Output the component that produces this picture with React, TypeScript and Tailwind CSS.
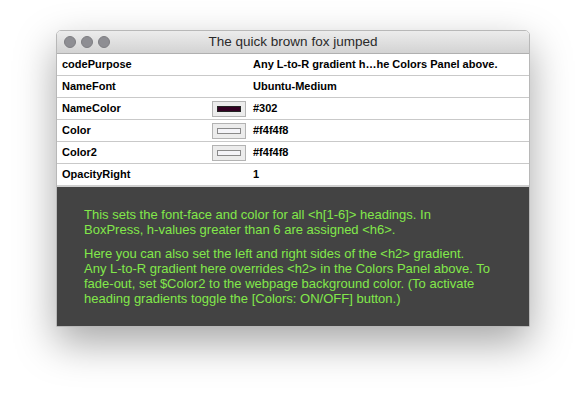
const rows: { label: string; value: string; swatch?: string }[] = [
  { label: 'codePurpose', value: 'Any L-to-R gradient h…he Colors Panel above.' },
  { label: 'NameFont', value: 'Ubuntu-Medium' },
  { label: 'NameColor', value: '#302', swatch: '#330022' },
  { label: 'Color', value: '#f4f4f8', swatch: '#f4f4f8' },
  { label: 'Color2', value: '#f4f4f8', swatch: '#f4f4f8' },
  { label: 'OpacityRight', value: '1' },
];

function Swatch({ color }: { color: string }) {
  const dark = color === '#330022';
  return (
    <div className="w-[34px] h-[16px] bg-[#ececec] border border-[#b3b3b3] flex items-center justify-center">
      <div
        className={dark ? 'w-[24px] h-[6px] border border-[#222]' : 'w-[24px] h-[6px] border border-[#8a8a8a]'}
        style={{ backgroundColor: color }}
      />
    </div>
  );
}

export default function App() {
  return (
    <div className="w-[586px] h-[407px] bg-white overflow-hidden font-['Liberation_Sans',Arial,sans-serif]">
      <div className="ml-[56px] mt-[30px] w-[474px] h-[297px] flex flex-col rounded-t-[5px] border border-[#b8b8b8] shadow-[0_16px_40px_rgba(0,0,0,0.35)] overflow-hidden">
        {/* title bar */}
        <div className="relative h-[23px] shrink-0 flex items-center justify-center bg-gradient-to-b from-[#ececec] to-[#d3d3d3] border-b border-[#b0b0b0]">
          <div className="absolute left-[7px] top-[5px] flex gap-[5px]">
            <div className="w-[12px] h-[12px] rounded-full bg-[#8e8e93] border border-[#7e7e82]" />
            <div className="w-[12px] h-[12px] rounded-full bg-[#8e8e93] border border-[#7e7e82]" />
            <div className="w-[12px] h-[12px] rounded-full bg-[#8e8e93] border border-[#7e7e82]" />
          </div>
          <span className="text-[13.5px] text-[#2a2a2a]">The quick brown fox jumped</span>
        </div>

        {/* property table */}
        <div className="bg-white shrink-0">
          {rows.map((r, i) => (
            <div
              key={r.label}
              className={i < rows.length - 1 ? 'h-[22px] flex items-center border-b border-[#c9c9c9]' : 'h-[21px] flex items-center'}
            >
              <div className="w-[155px] pl-[5px] text-[11px] font-bold text-black">{r.label}</div>
              <div className="w-[41px] flex items-center">{r.swatch && <Swatch color={r.swatch} />}</div>
              <div className="text-[11px] font-bold text-black">{r.value}</div>
            </div>
          ))}
        </div>

        {/* help panel */}
        <div className="flex-1 bg-[#434343] border-t-[2px] border-[#cfcfcf] pt-[20px] pl-[27px] text-[13px] leading-[15px] text-[#82e84a]">
          <p>
            This sets the font-face and color for all &lt;h[1-6]&gt; headings. In
            <br />
            BoxPress, h-values greater than 6 are assigned &lt;h6&gt;.
          </p>
          <p className="mt-[9px]">
            Here you can also set the left and right sides of the &lt;h2&gt; gradient.
            <br />
            Any L-to-R gradient here overrides &lt;h2&gt; in the Colors Panel above. To
            <br />
            fade-out, set $Color2 to the webpage background color. (To activate
            <br />
            heading gradients toggle the [Colors: ON/OFF] button.)
          </p>
        </div>
      </div>
    </div>
  );
}
